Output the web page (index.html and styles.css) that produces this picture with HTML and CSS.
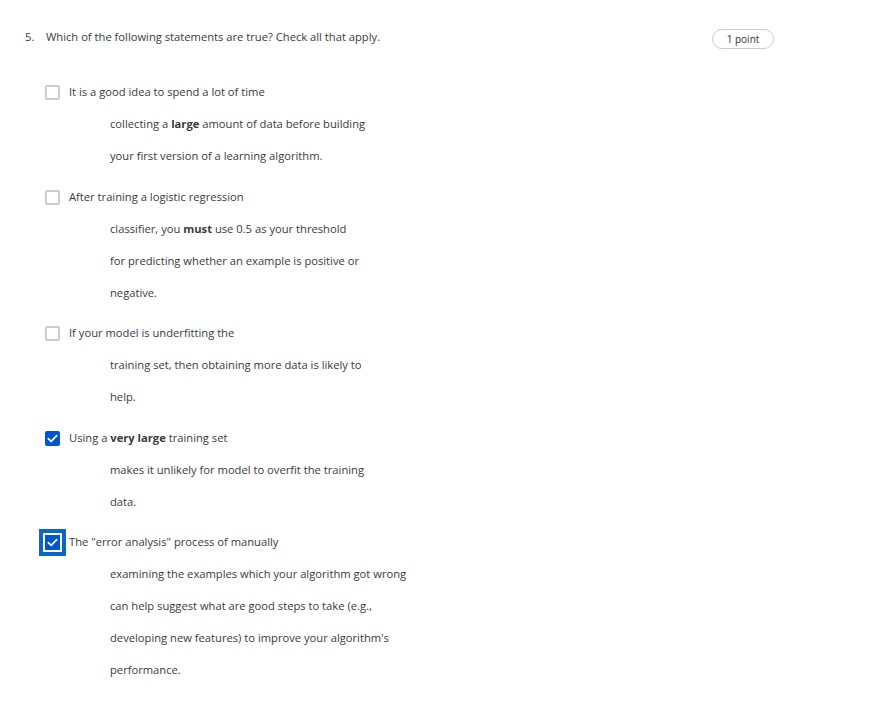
FILE: index.html
```html
<!DOCTYPE html>
<html>
<head>
<meta charset="utf-8">
<link rel="stylesheet" href="styles.css">
</head>
<body>
<div class="question">
  <div class="q-head">
    <div class="q-title"><span class="q-num">5.</span><span class="q-text">Which of the following statements are true? Check all that apply.</span></div>
    <div class="points">1 point</div>
  </div>
  <div class="options">
    <div class="option">
      <span class="box"></span>
      <div class="label">
        <div class="first">It is a good idea to spend a lot of time</div>
        <div class="cont">collecting a <b>large</b> amount of data before building</div>
        <div class="cont">your first version of a learning algorithm.</div>
      </div>
    </div>
    <div class="option">
      <span class="box"></span>
      <div class="label">
        <div class="first">After training a logistic regression</div>
        <div class="cont">classifier, you <b>must</b> use 0.5 as your threshold</div>
        <div class="cont">for predicting whether an example is positive or</div>
        <div class="cont">negative.</div>
      </div>
    </div>
    <div class="option">
      <span class="box"></span>
      <div class="label">
        <div class="first">If your model is underfitting the</div>
        <div class="cont">training set, then obtaining more data is likely to</div>
        <div class="cont">help.</div>
      </div>
    </div>
    <div class="option">
      <span class="box checked"><svg viewBox="0 0 16 16" width="15" height="15"><path d="M3.5 8.2 L6.6 11 L12.5 5" fill="none" stroke="#fff" stroke-width="1.8" stroke-linecap="round" stroke-linejoin="round"/></svg></span>
      <div class="label">
        <div class="first">Using a <b>very large</b> training set</div>
        <div class="cont">makes it unlikely for model to overfit the training</div>
        <div class="cont">data.</div>
      </div>
    </div>
    <div class="option">
      <span class="box checked focused"><svg viewBox="0 0 16 16" width="15" height="15"><path d="M3.5 8.2 L6.6 11 L12.5 5" fill="none" stroke="#fff" stroke-width="1.8" stroke-linecap="round" stroke-linejoin="round"/></svg></span>
      <div class="label">
        <div class="first">The "error analysis" process of manually</div>
        <div class="cont">examining the examples which your algorithm got wrong</div>
        <div class="cont">can help suggest what are good steps to take (e.g.,</div>
        <div class="cont">developing new features) to improve your algorithm's</div>
        <div class="cont">performance.</div>
      </div>
    </div>
  </div>
</div>
</body>
</html>
```
FILE: styles.css
```css
html, body {
  margin: 0;
  padding: 0;
  background: #fff;
}
body {
  font-family: "Open Sans", "Liberation Sans", sans-serif;
  font-size: 11.2px;
  color: #3a3a3a;
}
.question {
  width: 749px;
  padding: 28px 0 0 25px;
}
.q-head {
  display: flex;
  justify-content: space-between;
  align-items: flex-start;
}
.q-title {
  display: flex;
  line-height: 18px;
}
.q-num {
  width: 21px;
}
.points {
  margin-top: 1px;
  width: 60px;
  height: 18px;
  border: 1px solid #ccc;
  border-radius: 10px;
  font-size: 10px;
  line-height: 18px;
  text-align: center;
  color: #333;
}
.options {
  display: flex;
  flex-direction: column;
  gap: 8.6px;
  padding-left: 20px;
  margin-top: 27px;
}
.option {
  display: flex;
  align-items: flex-start;
}
.box {
  flex: none;
  box-sizing: border-box;
  width: 15px;
  height: 15px;
  margin-top: 9px;
  margin-right: 9px;
  border: 2px solid #ccc;
  border-radius: 2px;
  background: #fff;
  display: flex;
}
.box.checked {
  border: none;
  background: #0056d2;
}
.box.focused {
  border-radius: 0;
  outline: 4px solid #0a66c8;
  outline-offset: 2px;
}
.label {
  line-height: 32px;
}
.cont {
  padding-left: 41px;
}
b {
  font-weight: 700;
}
```
